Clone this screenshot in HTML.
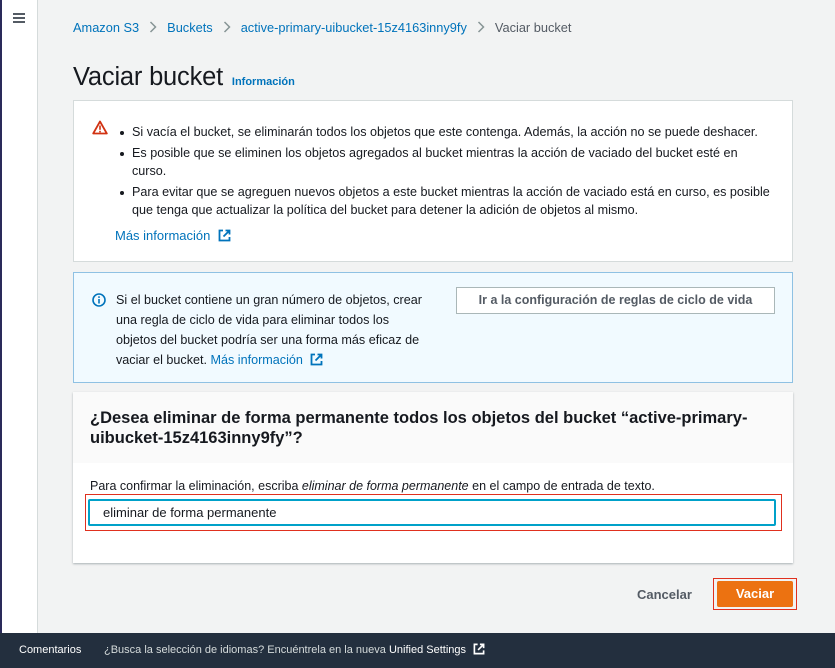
<!DOCTYPE html>
<html><head><meta charset="utf-8"><style>
*{box-sizing:border-box;margin:0;padding:0}
body{width:835px;height:668px;overflow:hidden;background:#f2f3f3;font-family:"Liberation Sans",sans-serif;color:#16191f;font-size:13px;position:relative}
.abs{position:absolute}
a,.link{color:#0073bb;text-decoration:none}
.side{left:0;top:0;width:38px;height:633px;background:#fff;border-right:1px solid #d5dbdb;border-left:2px solid #2a2a5a}
.bc{left:73px;top:20px;font-size:12.8px;white-space:nowrap}
.sep{display:inline-block;margin:0 10px;vertical-align:-1px}
h1{position:absolute;left:73px;top:63px;font-size:25.5px;font-weight:400;letter-spacing:-0.2px}
.box{left:73px;width:720px;border:1px solid #d5dbdb;background:#fff}
ul{list-style:none}
li{position:relative;padding-left:12px;line-height:18px;margin-bottom:3px;font-size:12.6px}
li:before{content:"";position:absolute;left:0;top:8px;width:4px;height:4px;border-radius:50%;background:#16191f}
.ext{display:inline-block;vertical-align:-2px;margin-left:4px}
</style></head><body>
<div class="abs side"><div style="position:absolute;left:11px;top:13px;width:12px">
<div style="height:2px;background:#545b64;margin-bottom:2px"></div><div style="height:2px;background:#545b64;margin-bottom:2px"></div><div style="height:2px;background:#545b64"></div></div></div>
<div class="abs bc"><a>Amazon S3</a><svg class="sep" width="8" height="12" viewBox="0 0 8 12"><path d="M1.5 1L6.5 6L1.5 11" fill="none" stroke="#879596" stroke-width="1.5"/></svg><a>Buckets</a><svg class="sep" width="8" height="12" viewBox="0 0 8 12"><path d="M1.5 1L6.5 6L1.5 11" fill="none" stroke="#879596" stroke-width="1.5"/></svg><a>active-primary-uibucket-15z4163inny9fy</a><svg class="sep" width="8" height="12" viewBox="0 0 8 12"><path d="M1.5 1L6.5 6L1.5 11" fill="none" stroke="#879596" stroke-width="1.5"/></svg><span style="color:#545b64">Vaciar bucket</span></div>
<h1>Vaciar bucket <a style="font-size:11px;font-weight:700;letter-spacing:0;margin-left:2px">Información</a></h1>
<div class="abs box" style="top:100px;height:162px">
<svg class="abs" style="left:18px;top:19px" width="16" height="15" viewBox="0 0 16 15"><path d="M8 1.5L14.8 13.5H1.2Z" fill="none" stroke="#d13212" stroke-width="1.8" stroke-linejoin="round"/><rect x="7.2" y="5.5" width="1.6" height="4.3" fill="#d13212"/><rect x="7.2" y="10.8" width="1.6" height="1.6" fill="#d13212"/></svg>
<ul class="abs" style="left:46px;top:22px;width:645px">
<li>Si vacía el bucket, se eliminarán todos los objetos que este contenga. Además, la acción no se puede deshacer.</li>
<li>Es posible que se eliminen los objetos agregados al bucket mientras la acción de vaciado del bucket esté en curso.</li>
<li style="white-space:nowrap">Para evitar que se agreguen nuevos objetos a este bucket mientras la acción de vaciado está en curso, es posible<br>que tenga que actualizar la política del bucket para detener la adición de objetos al mismo.</li>
</ul>
<a class="abs" style="left:41px;top:127px">Más información <svg class="ext" width="13" height="13" viewBox="0 0 13 13"><path d="M5 1.5H1.5V11.5H11.5V8M7.5 1.5H11.5V5.5M11.5 1.5L5.5 7.5" fill="none" stroke="#0073bb" stroke-width="1.8"/></svg></a>
</div>
<div class="abs box" style="top:272px;height:111px;background:#f1faff;border-color:#8fc1e3">
<svg class="abs" style="left:18px;top:20px" width="14" height="14" viewBox="0 0 14 14"><circle cx="7" cy="7" r="6" fill="none" stroke="#0073bb" stroke-width="1.6"/><rect x="6.2" y="6" width="1.6" height="4.5" fill="#0073bb"/><rect x="6.2" y="3.3" width="1.6" height="1.6" fill="#0073bb"/></svg>
<div class="abs" style="left:42px;top:17px;width:340px;line-height:20px;font-size:12.6px;white-space:nowrap">Si el bucket contiene un gran número de objetos, crear<br>una regla de ciclo de vida para eliminar todos los<br>objetos del bucket podría ser una forma más eficaz de<br>vaciar el bucket. <a>Más información <svg class="ext" width="13" height="13" viewBox="0 0 13 13"><path d="M5 1.5H1.5V11.5H11.5V8M7.5 1.5H11.5V5.5M11.5 1.5L5.5 7.5" fill="none" stroke="#0073bb" stroke-width="1.8"/></svg></a></div>
<div class="abs" style="left:382px;top:14px;width:319px;height:27px;border:1px solid #aab7b8;background:#fff;text-align:center;line-height:25px;font-weight:700;color:#545b64;font-size:12.5px">Ir a la configuración de reglas de ciclo de vida</div>
</div>
<div class="abs box" style="top:392px;height:171px;border:none;box-shadow:0 1px 2px rgba(0,28,36,.3)">
<div style="height:71px;background:#fafafa;padding:16px 0 0 17px;font-size:16.5px;font-weight:700;line-height:20px">¿Desea eliminar de forma permanente todos los objetos del bucket “active-primary-uibucket-15z4163inny9fy”?</div>
<div class="abs" style="left:17px;top:87px;font-size:12.5px">Para confirmar la eliminación, escriba <i>eliminar de forma permanente</i> en el campo de entrada de texto.</div>
<div class="abs" style="left:12px;top:102px;width:697px;height:37px;border:1px solid #e0301e"></div>
<div class="abs" style="left:15px;top:107px;width:688px;height:27px;border:2px solid #00a1c9;border-radius:2px;background:#fff;padding-left:13px;line-height:23px">eliminar de forma permanente</div>
</div>
<div class="abs" style="left:637px;top:587px;font-weight:700;color:#545b64">Cancelar</div>
<div class="abs" style="left:713px;top:578px;width:84px;height:32px;border:1px solid #e0301e"></div>
<div class="abs" style="left:717px;top:581px;width:76px;height:26px;background:#ec7211;border-radius:2px;color:#fff;font-weight:700;text-align:center;line-height:26px">Vaciar</div>
<div class="abs" style="left:0;top:633px;width:835px;height:35px;background:#232f3e;color:#d5dbdb;font-size:11px;line-height:35px">
<span class="abs" style="left:19px;color:#fff">Comentarios</span>
<span class="abs" style="left:104px">¿Busca la selección de idiomas? Encuéntrela en la nueva <span style="color:#fff">Unified Settings</span> <svg class="ext" width="12" height="12" viewBox="0 0 13 13"><path d="M5 1.5H1.5V11.5H11.5V8M7.5 1.5H11.5V5.5M11.5 1.5L5.5 7.5" fill="none" stroke="#fff" stroke-width="1.8"/></svg></span>
</div>
</body></html>
